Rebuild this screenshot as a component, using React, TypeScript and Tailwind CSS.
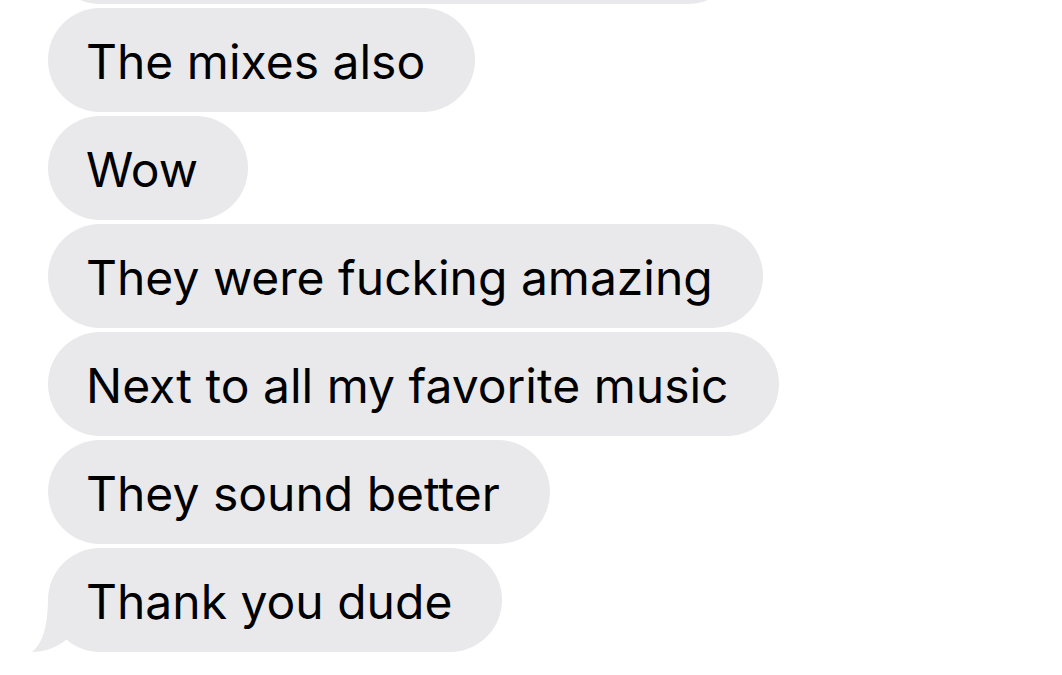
const messages = [
  'The mixes also',
  'Wow',
  'They were fucking amazing',
  'Next to all my favorite music',
  'They sound better',
  'Thank you dude',
];

function Bubble({ text, tail }: { text: string; tail?: boolean }) {
  return (
    <div className="relative self-start">
      {tail && (
        <svg
          className="absolute left-[-16px] top-0"
          width="80"
          height="104"
          viewBox="-16 0 80 104"
        >
          <path d="M0 48 C0 78 -5 95 -16 104 C-4 104 8 100 18 92 L52 52 Z" fill="#e9e9eb" />
        </svg>
      )}
      <div className="relative flex h-[104px] items-center rounded-full bg-[#e9e9eb] pl-[38px] pr-[50px] pt-[4px] text-[48px] text-black">
        {text}
      </div>
    </div>
  );
}

export default function App() {
  return (
    <div
      className="h-[675px] w-[1062px] overflow-hidden bg-white"
      style={{ fontFamily: 'Inter, "Liberation Sans", sans-serif' }}
    >
      <div className="ml-[48px] mt-[-100px] flex flex-col gap-[4px]">
        <div className="h-[104px] w-[692px] rounded-full bg-[#e9e9eb]" />
        {messages.map((m, i) => (
          <Bubble key={m} text={m} tail={i === messages.length - 1} />
        ))}
      </div>
    </div>
  );
}
